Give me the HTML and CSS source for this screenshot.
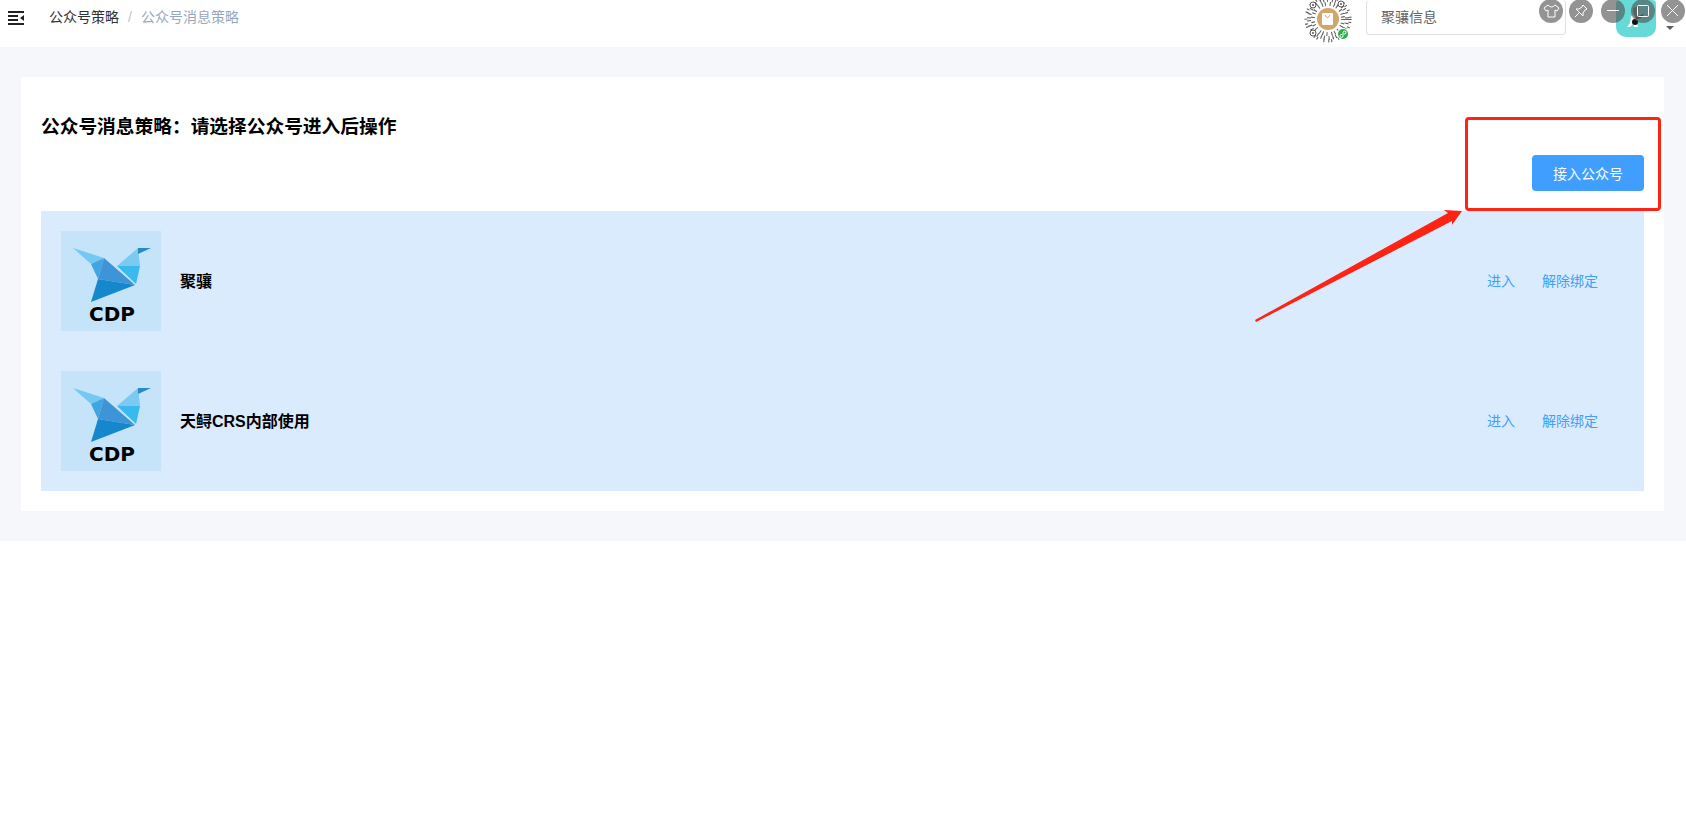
FILE: index.html
```html
<!DOCTYPE html>
<html lang="zh-CN">
<head>
    <meta charset="UTF-8">
    <meta name="viewport" content="width=device-width, initial-scale=1.0">
    <title>公众号消息策略</title>
    <link rel="stylesheet" href="styles.css">
</head>
<body>
    <!-- 顶部导航 -->
    <header class="navbar">
        <button class="icon-btn" type="button" aria-label="折叠菜单">
            <svg width="16" height="14" viewBox="0 0 16 14">
                <path d="M0 1H16M0 5H10M0 9H10M0 13H16" stroke="#222" stroke-width="2" />
                <path d="M16 4V10L12 7Z" fill="#222" />
            </svg>
        </button>
        <nav class="breadcrumb">
            <a href="#">公众号策略</a>
            <span class="separator">/</span>
            <span class="current">公众号消息策略</span>
        </nav>

        <div class="navbar-right">
            <!-- 小程序码 -->
            <svg class="qrcode" width="50" height="43" viewBox="0 0 50 43">
                <g fill="none" stroke="#555">
                    <circle cx="25" cy="19" r="15" stroke-width="4" stroke-dasharray="1 3 1 2 1 4" />
                    <circle cx="25" cy="19" r="19" stroke-width="4" stroke-dasharray="1 3 1 4 1 2" />
                    <circle cx="25" cy="19" r="22" stroke-width="3" stroke-dasharray="1 2 1 4 1 6" />
                </g>
                <g fill="#fff" stroke="#555">
                    <circle cx="10" cy="5" r="3" />
                    <circle cx="38" cy="4" r="3" />
                    <circle cx="10" cy="33" r="3" />
                </g>
                <g fill="#555">
                    <circle cx="10" cy="5" r="1" />
                    <circle cx="38" cy="4" r="1" />
                    <circle cx="10" cy="33" r="1" />
                </g>
                <circle cx="25" cy="19" r="13" fill="#fff" />
                <circle cx="25" cy="19" r="11" fill="#cfa768" />
                <rect x="19" y="13" width="11" height="12" rx="1" fill="#fff" />
                <path d="M22 15Q24.500 20 27 15" fill="none" stroke="#cfa768" />
                <circle cx="40" cy="34" r="6" fill="#fff" />
                <circle cx="40" cy="34" r="5" fill="#2aae4a" />
                <path d="M39 34.500a1.500 1.500 0 1 0 1 1.500V32.500a1.500 1.500 0 1 1 1 1.500" fill="none" stroke="#fff" />
            </svg>
            <select class="company" aria-label="公司">
                <option>聚骧信息</option>
            </select>
            <button class="avatar" type="button" aria-label="用户">
                <svg width="40" height="37" viewBox="0 0 40 37">
                    <path d="M17 8L23 6L22 18L18 17Z" fill="#777" />
                    <path d="M15 16L18 15L22 27H18L17 24L14 27H11L14 23Z" fill="#fff" />
                    <path d="M20 17L28 14L25 18L20 19Z" fill="#333" />
                    <circle cx="19" cy="22" r="3" fill="#111" />
                </svg>
            </button>
            <svg class="caret" width="8" height="4" viewBox="0 0 8 4"><path d="M0 0H8L4 4Z" fill="#5a5e66" /></svg>
        </div>
    </header>

    <!-- 悬浮窗口按钮 -->
    <div class="window-tools">
        <button type="button" aria-label="换肤">
            <svg viewBox="0 0 24 24"><path d="M9 6L5 9L7 12L9 11V18H16V11L18 12L20 9L16 6Q12.500 10 9 6Z" /></svg>
        </button>
        <button type="button" aria-label="置顶">
            <svg viewBox="0 0 24 24"><path d="M14 6L18 10L16 11L14 14V17L7 10H10L13 8ZM10 14L6 18" /></svg>
        </button>
        <button class="minimize" type="button" aria-label="最小化">
            <svg viewBox="0 0 24 24"><path d="M6 11.500H18" /></svg>
        </button>
        <button type="button" aria-label="最大化">
            <svg viewBox="0 0 24 24"><rect x="6.500" y="6.500" width="11" height="11" rx="1" /></svg>
        </button>
        <button type="button" aria-label="关闭">
            <svg viewBox="0 0 24 24"><path d="M6 6L17 17M17 6L6 17" /></svg>
        </button>
    </div>

    <main class="app-main">
        <section class="card">
            <h3>公众号消息策略：请选择公众号进入后操作</h3>
            <div class="toolbar">
                <button class="btn-primary" type="button">接入公众号</button>
                <!-- 标注框和箭头 -->
                <div class="mark-box"></div>
                <svg class="mark-arrow" width="210" height="114" viewBox="0 0 210 114">
                    <path d="M1 111L194 4L190 1L208 2L198 16L198 12L2 113Z" fill="#ff2314" />
                </svg>
            </div>

            <ul class="account-list">
                <li class="account">
                    <svg class="logo" width="100" height="100" viewBox="0 0 100 100">
                        <rect width="100" height="100" fill="#c5e3f9" />
                        <path d="M12 17L43 27L30 33Z" fill="#74c8f1" />
                        <path d="M43 27L30 33L37 48Z" fill="#41a5df" />
                        <path d="M43 27L37 48L74 54Z" fill="#3d94d6" />
                        <path d="M37 48L74 54L30 71Z" fill="#1587cd" />
                        <path d="M56 35L77 17L79 35Z" fill="#7acaf2" />
                        <path d="M56 35H79L75 53Z" fill="#38b9ef" />
                        <path d="M77 17H90L77 23Z" fill="#2789c9" />
                        <text x="28" y="90">CDP</text>
                    </svg>
                    <strong class="name">聚骧</strong>
                    <button class="btn-text" type="button">进入</button>
                    <button class="btn-text" type="button">解除绑定</button>
                </li>
                <li class="account">
                    <svg class="logo" width="100" height="100" viewBox="0 0 100 100">
                        <rect width="100" height="100" fill="#c5e3f9" />
                        <path d="M12 17L43 27L30 33Z" fill="#74c8f1" />
                        <path d="M43 27L30 33L37 48Z" fill="#41a5df" />
                        <path d="M43 27L37 48L74 54Z" fill="#3d94d6" />
                        <path d="M37 48L74 54L30 71Z" fill="#1587cd" />
                        <path d="M56 35L77 17L79 35Z" fill="#7acaf2" />
                        <path d="M56 35H79L75 53Z" fill="#38b9ef" />
                        <path d="M77 17H90L77 23Z" fill="#2789c9" />
                        <text x="28" y="90">CDP</text>
                    </svg>
                    <strong class="name">天鲟CRS内部使用</strong>
                    <button class="btn-text" type="button">进入</button>
                    <button class="btn-text" type="button">解除绑定</button>
                </li>
            </ul>
        </section>
    </main>
</body>
</html>
```
FILE: styles.css
```css
* {
    box-sizing: border-box;
}

body {
    margin: 0;
    background-color: #fff;
    color: #000;
    font-family: "Liberation Sans", "Noto Sans CJK SC", sans-serif;
}

button {
    padding: 0;
    border: none;
    background: none;
    font-family: inherit;
    font-size: 14px;
    cursor: pointer;
}

svg {
    display: block;
}

/* 顶部导航 */
.navbar {
    display: flex;
    align-items: flex-start;
    height: 47px;
    padding-left: 8px;
}

.icon-btn {
    margin-top: 11px;
}

.breadcrumb {
    display: flex;
    gap: 9px;
    margin-left: 25px;
    font-size: 14px;
    line-height: 34px;
    color: #97a8be;
}

.breadcrumb a {
    color: #303133;
    text-decoration: none;
}

.separator {
    color: #c0c4cc;
}

.navbar-right {
    display: flex;
    align-items: flex-start;
    margin-left: auto;
    padding-right: 12px;
}

.company {
    width: 200px;
    height: 35px;
    margin: 0 50px 0 13px;
    padding: 0 14px;
    border: 1px solid #dcdfe6;
    border-top: none;
    border-radius: 4px;
    appearance: none;
    background-color: #fff;
    color: #606266;
    font-family: inherit;
    font-size: 14px;
}

.avatar {
    border-radius: 4px 4px 10px 10px;
    background-color: #66dad7;
}

.caret {
    margin: 26px 0 0 10px;
}

/* 悬浮窗口按钮 */
.window-tools {
    position: absolute;
    top: -1px;
    right: 1px;
    display: flex;
    gap: 6px;
}

.window-tools button {
    width: 24px;
    height: 24px;
    border-radius: 50%;
    background-color: rgba(80, 80, 80, 0.62);
}

.window-tools .minimize {
    margin-left: 2px;
}

.window-tools path,
.window-tools rect {
    fill: none;
    stroke: #fff;
}

/* 内容区 */
.app-main {
    padding: 30px 22px 30px 21px;
    background-color: #f5f7fb;
}

.card {
    padding: 18px 20px 20px;
    background-color: #fff;
}

h3 {
    margin: 0;
    padding: 20px 0 16px;
    line-height: 24px;
}

.toolbar {
    position: relative;
    display: flex;
    justify-content: flex-end;
    margin-bottom: 20px;
}

.btn-primary {
    height: 36px;
    padding: 0 21px;
    border-radius: 4px;
    background-color: #409eff;
    color: #fff;
}

.mark-box {
    position: absolute;
    top: -38px;
    right: -17px;
    width: 196px;
    height: 94px;
    border: 3px solid #ff2314;
    border-radius: 4px;
    pointer-events: none;
}

.mark-arrow {
    position: absolute;
    top: 54px;
    right: 180px;
    pointer-events: none;
}

.account-list {
    margin: 0;
    padding: 0;
    background-color: #dbebfe;
    list-style: none;
}

.account {
    display: flex;
    align-items: center;
    padding: 20px 46px 20px 20px;
}

.logo text {
    font-family: "DejaVu Sans", sans-serif;
    font-size: 20px;
    font-weight: bold;
}

.name {
    margin: 0 auto 0 19px;
    padding-bottom: 2px;
    font-size: 16px;
}

.btn-text {
    margin-left: 27px;
    padding-bottom: 3px;
    color: #409eff;
}
```
